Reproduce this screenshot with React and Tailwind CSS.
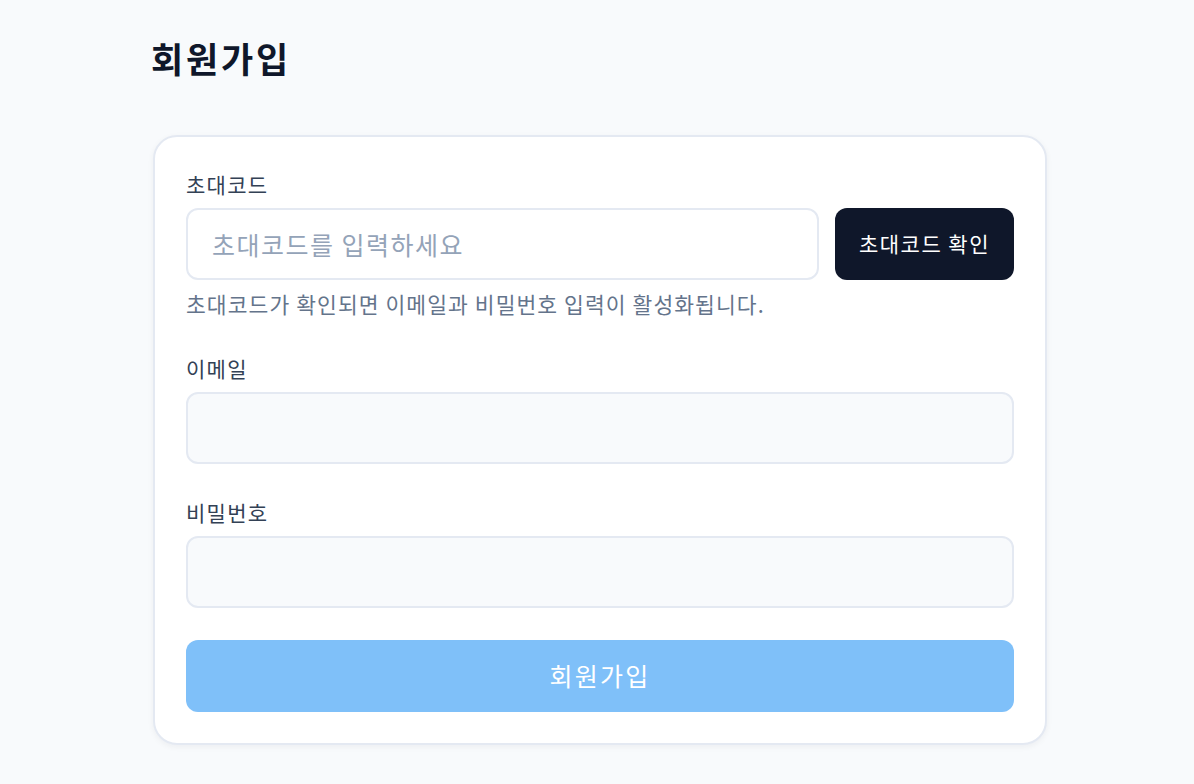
export default function App() {
  return (
    <div className="min-h-screen bg-[#f8fafc] pt-[34px] pb-10 font-['Noto_Sans_CJK_KR','Noto_Sans',sans-serif]">
      <div className="ml-[153px] w-[894px]">
        <h1 className="-ml-[2px] text-[35px] leading-[48px] tracking-[0.08em] font-bold text-[#0f172a] mb-[53px]">회원가입</h1>

        <div className="bg-white border-2 border-[#e4e9f2] rounded-3xl shadow-[0_2px_6px_rgba(15,23,42,0.05)] p-[31px]">
          <div>
            <label className="block text-[21px] leading-[32px] tracking-[0.06em] text-[#334155] mb-2">초대코드</label>
            <div className="flex gap-4">
              <input
                type="text"
                placeholder="초대코드를 입력하세요"
                className="flex-1 h-[72px] rounded-xl border-2 border-[#e4e9f2] bg-white px-6 text-[25px] tracking-[0.06em] text-[#0f172a] placeholder:text-[#94a3b8] outline-none"
              />
              <button className="w-[179px] h-[72px] rounded-xl bg-[#0f172a] text-white text-[21px] tracking-[0.07em] font-normal">
                초대코드 확인
              </button>
            </div>
            <p className="mt-2 text-[21.5px] leading-[32px] tracking-[0.05em] text-[#64748b]">
              초대코드가 확인되면 이메일과 비밀번호 입력이 활성화됩니다.
            </p>
          </div>

          <div className="mt-8">
            <label className="block text-[21px] leading-[32px] tracking-[0.06em] text-[#334155] mb-2">이메일</label>
            <input
              type="email"
              disabled
              className="w-full h-[72px] rounded-xl border-2 border-[#e4e9f2] bg-[#f8fafc] px-6 text-[24px] outline-none"
            />
          </div>

          <div className="mt-8">
            <label className="block text-[21px] leading-[32px] tracking-[0.06em] text-[#334155] mb-2">비밀번호</label>
            <input
              type="password"
              disabled
              className="w-full h-[72px] rounded-xl border-2 border-[#e4e9f2] bg-[#f8fafc] px-6 text-[24px] outline-none"
            />
          </div>

          <button disabled className="mt-8 w-full h-[72px] rounded-xl bg-[#7fc0f9] text-white text-[25px] tracking-[0.09em] font-normal">
            회원가입
          </button>
        </div>
      </div>
    </div>
  )
}
